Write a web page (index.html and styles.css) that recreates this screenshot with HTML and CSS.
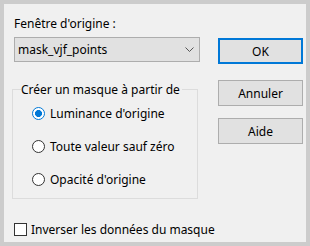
FILE: index.html
```html
<!DOCTYPE html>
<html lang="fr">
<head>
  <meta charset="UTF-8" />
  <title>Masque à partir d'une image</title>
  <link rel="stylesheet" href="styles.css">
</head>
<body>
  <div class="dialog">
    <div class="main">
      <div class="col-left">
        <label class="field-label">Fenêtre d'origine :</label>
        <div class="combo">
          <span class="combo-value">mask_vjf_points</span>
          <svg class="chevron" width="9" height="5" viewBox="0 0 9 5">
            <path d="M0.5 0.5 L4.5 4.5 L8.5 0.5" fill="none" stroke="#555" stroke-width="1"/>
          </svg>
        </div>

        <fieldset class="group">
          <legend>Créer un masque à partir de</legend>
          <label class="option"><input type="radio" name="src" checked> Luminance d'origine</label>
          <label class="option"><input type="radio" name="src"> Toute valeur sauf zéro</label>
          <label class="option"><input type="radio" name="src"> Opacité d'origine</label>
        </fieldset>

        <label class="check"><input type="checkbox"> Inverser les données du masque</label>
      </div>

      <div class="col-right">
        <button class="btn btn-default">OK</button>
        <button class="btn">Annuler</button>
        <button class="btn">Aide</button>
      </div>
    </div>
  </div>
</body>
</html>
```

FILE: styles.css
```css
* {
  margin: 0;
  padding: 0;
  box-sizing: border-box;
}
body {
  font-family: 'Noto Sans', 'Open Sans', sans-serif;
  font-size: 12px;
  color: #000;
  background: #cccccc;
  width: 310px;
  height: 246px;
  padding: 4px;
}
.dialog {
  background: #f0f0f0;
  width: 302px;
  height: 238px;
  padding: 12px 0 0 8px;
}
.main {
  display: flex;
}
.col-left {
  width: 188px;
  display: flex;
  flex-direction: column;
}
.field-label {
  display: block;
  line-height: 15px;
  padding-left: 2px;
}
.combo {
  margin: 6px 0 0 2px;
  height: 25px;
  background: #e1e1e1;
  border: 1px solid #adadad;
  display: flex;
  align-items: center;
  justify-content: space-between;
  padding: 0 5px 0 3px;
}
.combo-value {
  line-height: 15px;
}
.chevron {
  display: block;
}
.group {
  margin-top: 20px;
  width: 186px;
  border: 1px solid #dcdcdc;
  padding: 0 0 3px 19px;
}
.group legend {
  margin-left: -11px;
  padding: 0 2px 0 0;
  line-height: 15px;
}
.option {
  display: flex;
  align-items: center;
  gap: 5px;
  height: 32px;
  line-height: 15px;
}
.option + .option {
  margin-top: 1px;
}
.option input,
.check input {
  appearance: none;
  -webkit-appearance: none;
  width: 13px;
  height: 13px;
  margin: 0;
  background: #fff;
  border: 1px solid #333;
  flex: none;
}
.option input {
  border-radius: 50%;
}
.option input:checked {
  border-color: #0078d7;
  background: radial-gradient(circle, #0078d7 0, #0078d7 3.2px, #fff 3.8px);
}
.check {
  margin: 23px 0 0 2px;
  display: flex;
  align-items: center;
  gap: 4px;
  line-height: 15px;
  white-space: nowrap;
}
.col-right {
  margin: 22px 0 0 18px;
  width: 85px;
  display: flex;
  flex-direction: column;
}
.btn {
  font-family: inherit;
  font-size: 12px;
  color: #000;
  height: 26px;
  background: #e1e1e1;
  border: 1px solid #adadad;
  margin-bottom: 16px;
}
.btn + .btn + .btn {
  margin-top: -4px;
}
.btn-default {
  border: 2px solid #0078d7;
}
```
